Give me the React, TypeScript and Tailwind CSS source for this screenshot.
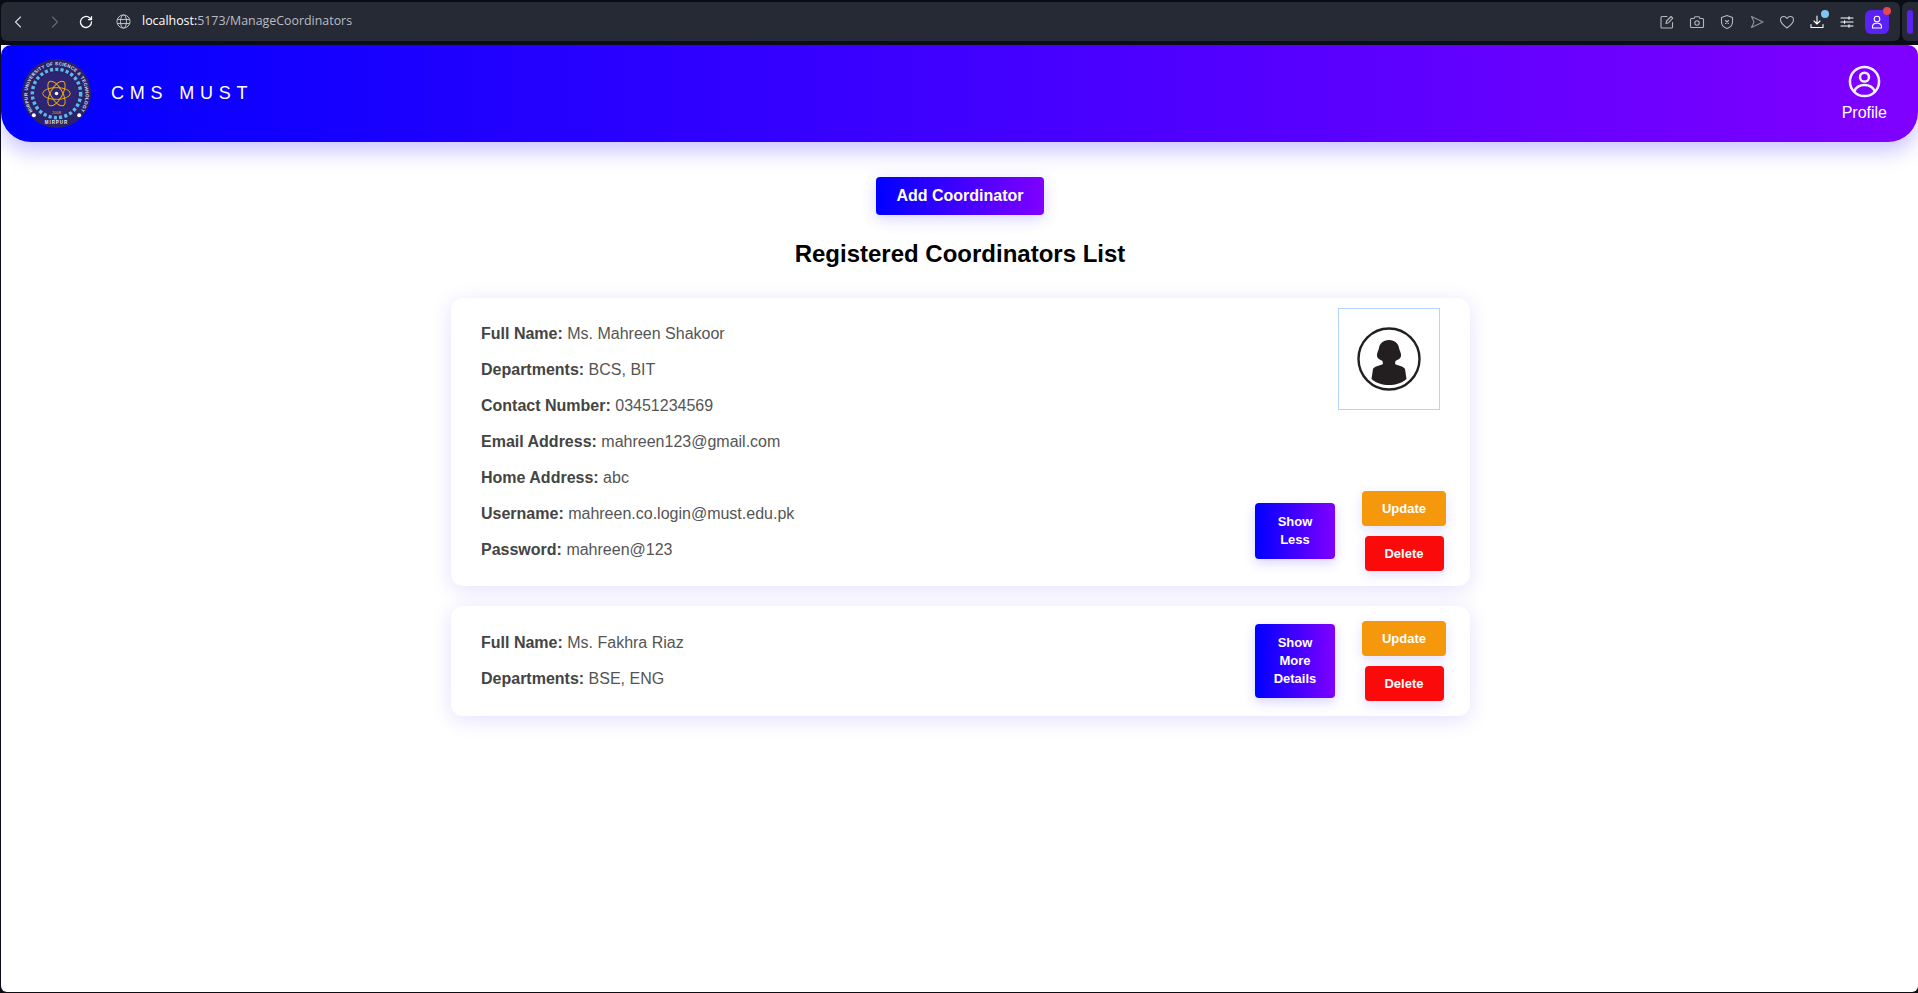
const gradient = "bg-linear-to-r/srgb from-[#0000ff] to-[#8000ff]"

type Coordinator = {
  lines: [string, string][]
  showLabel: string
  showPhoto: boolean
}

const coordinators: Coordinator[] = [
  {
    lines: [
      ["Full Name:", "Ms. Mahreen Shakoor"],
      ["Departments:", "BCS, BIT"],
      ["Contact Number:", "03451234569"],
      ["Email Address:", "mahreen123@gmail.com"],
      ["Home Address:", "abc"],
      ["Username:", "mahreen.co.login@must.edu.pk"],
      ["Password:", "mahreen@123"],
    ],
    showLabel: "Show Less",
    showPhoto: true,
  },
  {
    lines: [
      ["Full Name:", "Ms. Fakhra Riaz"],
      ["Departments:", "BSE, ENG"],
    ],
    showLabel: "Show More Details",
    showPhoto: false,
  },
]

function ToolbarIcon({ children, color = "#b4b7be" }: { children: React.ReactNode; color?: string }) {
  return (
    <svg width="16" height="16" viewBox="0 0 16 16" fill="none" stroke={color} strokeWidth="1.1" strokeLinecap="round" strokeLinejoin="round">
      {children}
    </svg>
  )
}

function BrowserBar() {
  return (
    <div className="flex h-[45px] pt-[2px] pb-[4px] gap-[2px]">
      <div className="flex-1 flex items-center bg-[#262a35] rounded-[6px] pl-[10px] pr-[11px]">
        <svg width="14" height="14" viewBox="0 0 14 14" fill="none" stroke="#d5d7dc" strokeWidth="1.1" strokeLinecap="round" strokeLinejoin="round">
          <path d="M9.5 2 L4.5 7 L9.5 12" />
        </svg>
        <svg className="ml-[23px]" width="14" height="14" viewBox="0 0 14 14" fill="none" stroke="#666a74" strokeWidth="1.1" strokeLinecap="round" strokeLinejoin="round">
          <path d="M4.5 2 L9.5 7 L4.5 12" />
        </svg>
        <svg className="ml-[17px]" width="14" height="14" viewBox="0 0 14 14" fill="none" stroke="#ffffff" strokeWidth="1.3" strokeLinecap="round" strokeLinejoin="round">
          <path d="M12.5 7 A5.5 5.5 0 1 1 10.8 3 L12.5 4.6 M12.5 1.6 V4.6 H9.5" />
        </svg>
        <svg className="ml-[23px]" width="15" height="15" viewBox="0 0 16 16" fill="none" stroke="#c9cbd1" strokeWidth="1">
          <circle cx="8" cy="8" r="7" />
          <ellipse cx="8" cy="8" rx="3.2" ry="7" />
          <path d="M1.5 5.8 H14.5 M1.5 10.2 H14.5" />
        </svg>
        <div className="ml-[11px] text-[12.4px] font-['Open_Sans',sans-serif] text-[#b9bcc4]">
          <span className="text-white">localhost:</span>5173/ManageCoordinators
        </div>
        <div className="ml-auto flex items-center gap-[14px]">
          <ToolbarIcon>
            <path d="M8 2.5 H3 a1 1 0 0 0 -1 1 V13 a1 1 0 0 0 1 1 H12.5 a1 1 0 0 0 1 -1 V8.5" />
            <path d="M7 9.5 L7.6 7 L12 2.5 L13.8 4.2 L9.4 8.8 Z" />
          </ToolbarIcon>
          <ToolbarIcon>
            <path d="M2.5 4.5 H5 L6 2.8 H10 L11 4.5 H13.5 a1 1 0 0 1 1 1 V12.5 a1 1 0 0 1 -1 1 H2.5 a1 1 0 0 1 -1 -1 V5.5 a1 1 0 0 1 1 -1 Z" />
            <circle cx="8" cy="9" r="2.2" />
          </ToolbarIcon>
          <ToolbarIcon>
            <path d="M8 1.5 L13.5 3.5 V8 C13.5 11 11 13.5 8 14.5 C5 13.5 2.5 11 2.5 8 V3.5 Z" />
            <path d="M6.5 6.5 L9.5 9.5 M9.5 6.5 L6.5 9.5" />
          </ToolbarIcon>
          <ToolbarIcon color="#8f929b">
            <path d="M2.5 2.5 L14 8 L2.5 13.5 L5 8 Z" />
          </ToolbarIcon>
          <ToolbarIcon>
            <path d="M8 14 C3 10.5 1.5 8 1.5 5.8 C1.5 3.8 3 2.5 4.8 2.5 C6.2 2.5 7.3 3.2 8 4.5 C8.7 3.2 9.8 2.5 11.2 2.5 C13 2.5 14.5 3.8 14.5 5.8 C14.5 8 13 10.5 8 14 Z" />
          </ToolbarIcon>
          <div className="relative">
            <ToolbarIcon color="#ffffff">
              <path d="M8 2 V9.5 M5 7 L8 10 L11 7 M2 10.5 V13.5 H14 V10.5" />
            </ToolbarIcon>
            <span className="absolute -top-[4px] -right-[4px] w-[8px] h-[8px] rounded-full bg-[#7cc8f4]" />
          </div>
          <ToolbarIcon color="#ffffff">
            <path d="M2 4 H14 M2 8 H14 M2 12 H14 M10 2.8 V5.2 M5.5 6.8 V9.2 M10 10.8 V13.2" />
          </ToolbarIcon>
          <div className="relative -ml-[4px] w-[24px] h-[24px] rounded-[6px] bg-[#5a22f5] flex items-center justify-center">
            <ToolbarIcon color="#ffffff">
              <circle cx="8" cy="5" r="2.8" />
              <path d="M3.5 14 V12.5 C3.5 10.5 5 9.5 6.5 9.2 H9.5 C11 9.5 12.5 10.5 12.5 12.5 V14 Z" />
            </ToolbarIcon>
            <span className="absolute -top-[3px] -right-[2px] w-[8px] h-[8px] rounded-full bg-[#e5484d]" />
          </div>
        </div>
      </div>
      <div className="w-[16px] bg-[#262a35] rounded-l-[6px] flex items-center pl-[5px]">
        <div className="w-[6px] h-[24px] rounded-[3px] bg-[#5a22f5]" />
      </div>
    </div>
  )
}

function Logo() {
  return (
    <svg width="69" height="69" viewBox="0 0 70 70" className="shrink-0">
      <defs>
        <path id="logo-arc" d="M 11 53 A 29.5 29.5 0 1 1 59 53" />
      </defs>
      <circle cx="35" cy="35" r="35" fill="#2a2368" />
      <text fontSize="4.6" fill="#dfe3f2" fontFamily="Liberation Sans" fontWeight="700">
        <textPath href="#logo-arc" textLength="128">MIRPUR UNIVERSITY OF SCIENCE &amp; TECHNOLOGY</textPath>
      </text>
      <circle cx="35" cy="35" r="24.5" fill="none" stroke="#5bb8e8" strokeWidth="3.5" strokeDasharray="3.2 2.2" />
      <circle cx="35" cy="35" r="21.5" fill="#2e2474" />
      <g fill="none" stroke="#e8a90e" strokeWidth="1">
        <ellipse cx="35" cy="35" rx="14" ry="6" />
        <ellipse cx="35" cy="35" rx="14" ry="6" transform="rotate(60 35 35)" />
        <ellipse cx="35" cy="35" rx="14" ry="6" transform="rotate(120 35 35)" />
      </g>
      <circle cx="35" cy="35" r="1.8" fill="#ffffff" />
      <text x="35" y="56" fontSize="4" textAnchor="middle" fill="#e8a90e" fontFamily="Liberation Sans">2008</text>
      <circle cx="12" cy="57" r="2" fill="#ffffff" />
      <circle cx="58" cy="57" r="2" fill="#ffffff" />
      <text x="35" y="66" fontSize="4.5" textAnchor="middle" fill="#dfe3f2" fontWeight="700" letterSpacing="1" fontFamily="Liberation Sans">MIRPUR</text>
    </svg>
  )
}

function Header() {
  return (
    <header className={`${gradient} h-[97px] rounded-t-[10px] rounded-b-[30px] shadow-[0_10px_20px_rgba(50,30,255,0.25)] flex items-center justify-between pl-[21px] pr-[31px] text-white`}>
      <div className="flex items-center gap-[20px]">
        <Logo />
        <span className="text-[18px] tracking-[5.8px]">CMS MUST</span>
      </div>
      <div className="flex flex-col items-center gap-[5px] pt-[1px]">
        <svg width="33" height="33" viewBox="0 0 34 34" fill="none" stroke="#f2f0ff" strokeWidth="2.6" strokeLinecap="round">
          <circle cx="17" cy="17" r="15" />
          <circle cx="17" cy="12.5" r="4.6" />
          <path d="M6.5 27 C8.5 22 12.5 20.5 17 20.5 C21.5 20.5 25.5 22 27.5 27" />
        </svg>
        <span className="text-[16px] leading-[20px]">Profile</span>
      </div>
    </header>
  )
}

function PersonPhoto() {
  return (
    <div className="w-[102px] h-[102px] border border-[#b3d4fc] flex items-center justify-center -mt-[5px] mr-[6px]">
      <svg width="64" height="64" viewBox="0 0 64 64">
        <circle cx="32" cy="32" r="30.5" fill="none" stroke="#231f20" strokeWidth="2.4" />
        <path
          fill="#231f20"
          d="M32 13 C38 13 41.5 17 42 21 C42.5 24 44.5 26 44 29 C43.5 32 40 33 38.5 34 L38 37 C42 39 47 39.5 48 42 L49.5 52 C45 56 38.5 58 32 58 C25.5 58 19 56 14.5 52 L16 42 C17 39.5 22 39 26 37 L25.5 34 C24 33 20.5 32 20 29 C19.5 26 21.5 24 22 21 C22.5 17 26 13 32 13 Z"
        />
      </svg>
    </div>
  )
}

function CoordinatorCard({ coordinator }: { coordinator: Coordinator }) {
  return (
    <div className="bg-white rounded-[12px] shadow-[0_4px_20px_rgba(80,60,255,0.16)] flex items-center justify-between pl-[30px] pr-[24px] py-[15px]">
      <div className="py-[3px] text-[16px] leading-[36px] text-[#555555]">
        {coordinator.lines.map(([label, value]) => (
          <div key={label}>
            <b className="text-[#444444] font-bold">{label}</b> {value}
          </div>
        ))}
      </div>
      <div className="self-stretch flex flex-col items-end">
        {coordinator.showPhoto && <PersonPhoto />}
        <div className={`flex items-center gap-[27px] ${coordinator.showPhoto ? "mt-auto" : "my-auto"}`}>
          <button className={`${gradient} w-[80px] rounded-[4px] py-[10px] px-[8px] text-white text-[13px] font-bold leading-[18px] shadow-[0_4px_12px_rgba(60,40,255,0.2)]`}>
            {coordinator.showLabel}
          </button>
          <div className="flex flex-col items-center gap-[10px]">
            <button className="w-[84px] h-[35px] rounded-[4px] bg-[#f5980c] text-white text-[13px] font-bold shadow-[0_4px_12px_rgba(60,40,255,0.15)]">
              Update
            </button>
            <button className="w-[79px] h-[35px] rounded-[4px] bg-[#fa0a0a] text-white text-[13px] font-bold shadow-[0_4px_12px_rgba(60,40,255,0.15)]">
              Delete
            </button>
          </div>
        </div>
      </div>
    </div>
  )
}

export default function App() {
  return (
    <div className="h-[993px] overflow-hidden bg-[#0b0d14] pl-px pb-px font-['Liberation_Sans',Arial,sans-serif] flex flex-col">
      <BrowserBar />
      <div className="flex-1 bg-white rounded-b-[6px]">
        <Header />
        <main className="flex flex-col items-center pt-[35px] pl-px">
          <button className={`${gradient} w-[168px] h-[38px] rounded-[4px] text-white text-[16px] font-bold shadow-[0_4px_15px_rgba(60,40,255,0.2)]`}>
            Add Coordinator
          </button>
          <h2 className="mt-[24px] text-[24px] leading-[30px] font-bold text-black">Registered Coordinators List</h2>
          <div className="mt-[29px] ml-px w-[1019px] flex flex-col gap-[20px]">
            {coordinators.map((c) => (
              <CoordinatorCard key={c.lines[0][1]} coordinator={c} />
            ))}
          </div>
        </main>
      </div>
    </div>
  )
}
